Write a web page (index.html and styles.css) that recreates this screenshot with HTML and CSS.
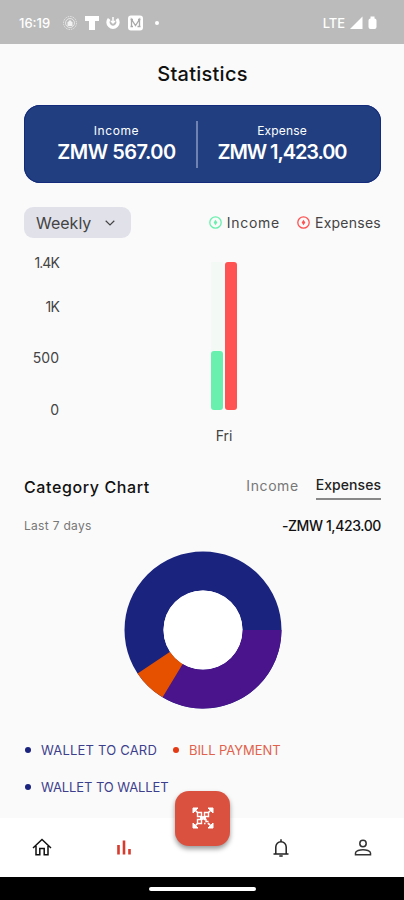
FILE: index.html
```html
<!DOCTYPE html>
<html lang="en">
<head>
<meta charset="utf-8">
<title>Statistics</title>
<link rel="stylesheet" href="styles.css">
</head>
<body>
<div class="status">
  <span class="clock">16:19</span>
  <svg class="status-icons" width="94" height="16" viewBox="0 0 94 16">
    <g fill="none" stroke="#fff"><circle cx="7" cy="8" r="6.500" stroke-dasharray="1.500 1" opacity=".6"/><circle cx="7" cy="8" r="4.500" opacity=".6"/></g>
    <path d="M4.500 7.500 7 5l2.500 2.500V11h-5z" fill="#fff" opacity=".8"/>
    <path d="M22 1h14v5h-4v9h-6V6h-4z" fill="#fff"/>
    <path d="M46.200 4a5 5 0 1 0 7.600 0" fill="none" stroke="#fff" stroke-width="3.400"/>
    <path d="M50 2v6M48 6l2 2 2-2" fill="none" stroke="#fff" stroke-width="1.500"/>
    <rect x="65" y=".5" width="15" height="15" rx="3" fill="#fff"/>
    <path d="M67.500 4.500h2.500M75 4.500h2.500M68.500 11.500v-7l4 6 4-6v7M67.500 11.500H70M74.500 11.500h3" fill="none" stroke="#aaa" stroke-width="1.300"/>
  </svg>
  <i class="status-dot"></i>
  <span class="lte">LTE</span>
  <svg width="28" height="14" viewBox="0 0 28 14"><path d="M0 13 12.500.5V13z" fill="#fff"/><path d="M20.500 2.500V.5h4v2q2 0 2 2V11q0 2-2 2h-4q-2 0-2-2V4.500q0-2 2-2z" fill="#fff"/></svg>
</div>
<main>
  <h1>Statistics</h1>
  <section class="card">
    <div class="total income"><span>Income</span><b>ZMW 567.00</b></div>
    <div class="total expense"><span>Expense</span><b>ZMW 1,423.00</b></div>
  </section>
  <div class="controls">
    <div class="select"><span>Weekly</span><svg width="10" height="6" viewBox="0 0 10 6"><path d="m.7.7 4.300 4.200L9.300.7" fill="none" stroke="#444" stroke-width="1.200"/></svg></div>
    <div class="key"><svg width="13" height="13" viewBox="0 0 13 13"><circle cx="6.500" cy="6.500" r="5.700" fill="none" stroke="#69f0ae" stroke-width="1.300"/><path d="M6.500 3.800 8.300 6.500 6.500 9.200 4.700 6.500z" fill="#69f0ae"/></svg><span class="k-inc">Income</span></div>
    <div class="key"><svg width="13" height="13" viewBox="0 0 13 13"><circle cx="6.500" cy="6.500" r="5.700" fill="none" stroke="#ff5252" stroke-width="1.300"/><path d="M6.500 3.800 8.300 6.500 6.500 9.200 4.700 6.500z" fill="#ff5252"/></svg><span class="k-exp">Expenses</span></div>
  </div>
  <section class="chart">
    <div class="axis"><span class="a14">1.4K</span><span class="a1">1K</span><span class="a5">500</span><span class="a0">0</span></div>
    <div class="plot">
      <div class="bars"><div class="track"><div class="bar green"></div></div><div class="bar red"></div></div>
      <span class="day">Fri</span>
    </div>
  </section>
  <div class="cat-head"><h2>Category Chart</h2><span class="tab">Income</span><span class="tab active">Expenses</span></div>
  <div class="summary"><span>Last 7 days</span><b>-ZMW 1,423.00</b></div>
  <svg class="donut" width="158" height="158" viewBox="-79 -79 158 158">
    <circle r="59" fill="none" stroke="#1a237e" stroke-width="39"/>
    <path d="M78.500 0A78.500 78.500 0 0 1-40.400 67.300L-20.300 33.900A39.500 39.500 0 0 0 39.500 0z" fill="#4a148c"/>
    <path d="M-40.400 67.300A78.500 78.500 0 0 1-65.400 43.400L-32.900 21.800A39.500 39.500 0 0 0-20.300 33.900z" fill="#e65100"/>
    <circle r="39.500" fill="#fff"/>
  </svg>
  <ul class="legend">
    <li class="l1">WALLET TO CARD</li>
    <li class="l2">BILL PAYMENT</li>
    <li class="l3">WALLET TO WALLET</li>
  </ul>
</main>
<nav>
  <svg width="20" height="20" viewBox="0 0 20 20"><path d="M1 10 10 1.500l9 8.500M4 8v8.700h3.800v-6.200h4.400v6.200H16V8" fill="none" stroke="#111" stroke-width="1.500"/></svg>
  <svg width="20" height="20" viewBox="0 0 20 20"><path d="M4.500 7v9.500M10 2.500v14M15.500 11v5.500" fill="none" stroke="#d83a2c" stroke-width="2.600"/></svg>
  <button class="fab" aria-label="Scan">
    <svg width="22" height="22" viewBox="0 0 22 22" fill="none" stroke="#fff"><path d="M1 6V1h5zM16 1h5v5zM1 16v5h5zM16 21h5v-5z" fill="#fff" stroke-width="1"/><path d="M2 2l4 4M20 2l-4 4M2 20l4-4M20 20l-4-4" stroke-width="1.500"/><path d="M5.500 5.500h4v4h-4zM12.500 5.500h4v4h-4zM5.500 12.500h4v4h-4zM12 12.500h2v2h2.500M12 16.500h1.500M16.500 16v1.500M11 9v4M8 11h6" stroke-width="1.400"/></svg>
  </button>
  <svg width="20" height="20" viewBox="0 0 20 20"><path d="M2.500 16h15M4.800 16V9a5.200 5.200 0 0 1 10.400 0v7M10 3.500V1.200M8.300 18h3.400" fill="none" stroke="#222" stroke-width="1.500"/></svg>
  <svg class="person" width="20" height="20" viewBox="0 0 20 20"><path d="M2.500 16.700v-1.600c0-2.200 4.500-3.400 7.500-3.400s7.500 1.200 7.500 3.400v1.600z" fill="none" stroke="#333" stroke-width="1.500"/><circle cx="10" cy="5.500" r="3.200" fill="none" stroke="#333" stroke-width="1.500"/></svg>
</nav>
<footer><i></i></footer>
</body>
</html>
```
FILE: styles.css
```css
* { box-sizing: border-box; }
body { margin: 0; width: 404px; height: 900px; overflow: hidden; display: flex; flex-direction: column; background: #fafafa; font-family: Inter, "Noto Sans", sans-serif; color: #111; }
h1, h2, ul { margin: 0; padding: 0; }
span, b, h1, h2, li { white-space: nowrap; }
.status { height: 44px; flex: none; background: #bbb; color: #fff; display: flex; align-items: center; padding: 2px 26px 0 19px; font-size: 13px; font-weight: 500; }
.clock { width: 44px; font-size: 13px; }
.status-dot { width: 4px; height: 4px; border-radius: 50%; background: #fff; margin-left: -2px; }
.lte { margin-left: auto; margin-right: 5px; font-weight: 500; letter-spacing: -.1px; }
main { flex: 1; padding: 0 23px 0 24px; min-height: 0; }
h1 { height: 61px; line-height: 61px; text-align: center; font-size: 20px; font-weight: 500; letter-spacing: .25px; }
.card { height: 78px; border-radius: 16px; background: #213f80; box-shadow: inset 0 0 0 1px #142b7b; color: #fff; display: flex; padding-top: 16px; }
.total { display: flex; flex-direction: column; align-items: center; height: 47px; }
.total span { font-size: 12px; line-height: 19px; }
.total b { font-size: 20px; line-height: 25px; font-weight: 600; }
.income { width: 174px; border-right: 2px solid #6f82b2; padding-left: 13px; }
.income span { letter-spacing: .6px; }
.income b { letter-spacing: -.5px; }
.expense { flex: 1; padding-right: 15px; }
.expense span { letter-spacing: .15px; }
.expense b { letter-spacing: -1.100px; }
.controls { display: flex; align-items: center; margin-top: 24px; height: 31px; font-size: 14px; color: #444; }
.select { width: 107px; height: 31px; border-radius: 9px; background: #e1e1ea; display: flex; align-items: center; justify-content: space-between; padding: 0 16px 0 12px; font-size: 16px; margin-right: auto; }
.key { display: flex; align-items: center; gap: 5px; margin-left: 17px; }
.k-inc { letter-spacing: .75px; }
.k-exp { letter-spacing: .25px; }
.chart { display: flex; height: 210px; padding-top: 14px; font-size: 14px; color: #444; }
.axis { width: 35px; display: flex; flex-direction: column; align-items: flex-end; line-height: 20px; padding-top: 1px; }
.a14 { letter-spacing: -.9px; }
.a1 { letter-spacing: -.8px; margin-top: 24px; }
.a5 { margin-top: 31px; }
.a0 { margin-top: 32px; }
.plot { flex: 1; padding: 10px 0 0 152px; display: flex; flex-direction: column; }
.bars { display: flex; gap: 2px; height: 148px; }
.track { width: 12px; background: #f3faf6; display: flex; align-items: flex-end; }
.bar { width: 12px; border-radius: 3px; }
.green { height: 59px; background: #69f0ae; }
.red { height: 148px; background: #ff5252; }
.day { width: 26px; text-align: center; line-height: 20px; margin-top: 16px; }
.cat-head { display: flex; height: 53px; padding-top: 24px; align-items: flex-start; }
h2 { font-size: 16px; font-weight: 500; line-height: 31px; margin-right: auto; letter-spacing: .6px; }
.tab { font-size: 14px; line-height: 27px; color: #777; letter-spacing: .6px; }
.active { color: #222; font-weight: 500; line-height: 25px; height: 28px; border-bottom: 2px solid #888; margin-left: 17px; letter-spacing: .05px; }
.summary { display: flex; justify-content: space-between; line-height: 24px; margin-top: 13px; font-size: 12px; color: #777; letter-spacing: .3px; }
.summary b { color: #111; font-size: 14px; font-weight: 500; letter-spacing: -.4px; }
.donut { display: block; margin: 13px 0 0 100px; }
.legend { list-style: none; display: flex; flex-wrap: wrap; margin-top: 31px; font-size: 13px; color: #3d3f8d; line-height: 20px; row-gap: 17px; }
.legend li { display: flex; align-items: center; }
.legend li::before { content: ""; width: 6px; height: 6px; border-radius: 50%; margin: 0 10px 0 1px; background: #1a237e; }
.l1 { letter-spacing: .2px; }
.l3 { letter-spacing: -.1px; }
.legend .l2 { color: #e0624c; margin-left: 15px; letter-spacing: -.05px; }
.legend .l2::before { background: #e53913; }
nav { height: 59px; flex: none; background: #fff; display: grid; grid-template-columns: 83px 82px 75px 82px 82px; justify-items: center; align-items: center; position: relative; }
.fab { width: 55px; height: 55px; border: 0; padding: 0; border-radius: 14px; background: #db5140; box-shadow: 0 3px 5px #0006; display: grid; place-items: center; margin-top: -59px; }
footer { height: 23px; flex: none; background: #000; display: flex; align-items: center; justify-content: center; }
footer i { width: 107px; height: 4px; border-radius: 2px; background: #fff; }
```
